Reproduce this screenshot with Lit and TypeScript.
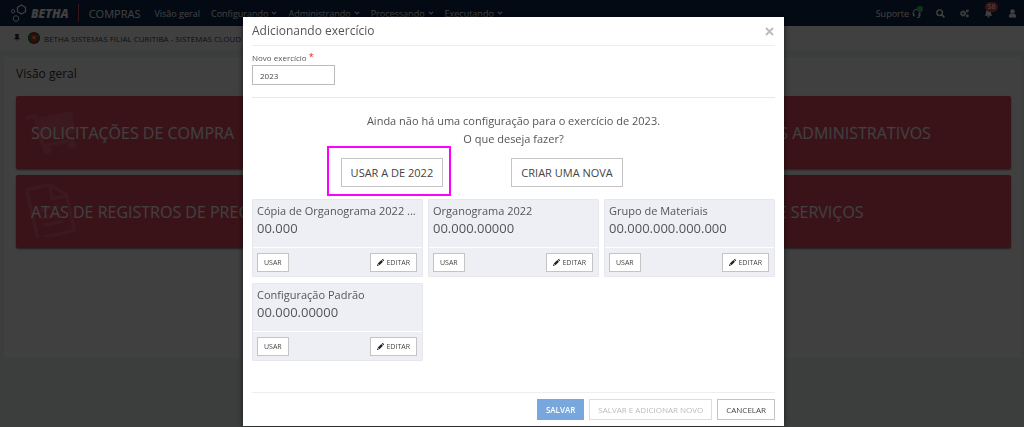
import { LitElement, html, css } from "lit";
import { customElement } from "lit/decorators.js";

const chevron = html`<svg class="chev" viewBox="0 0 10 10"><path d="M1.500 3 5 6.500 8.500 3" fill="none" stroke="currentColor" stroke-width="1.800"/></svg>`;
const pencil = html`<svg class="pencil" viewBox="0 0 16 16" aria-hidden="true"><path fill="currentColor" d="M0 16l1-4.600 3.600 3.600zM1.900 10.500 10 2.400l3.600 3.600-8.100 8.100zM11 1.400 12 .5c.6-.6 1.400-.6 2 0l1.600 1.600c.6.6.6 1.400 0 2l-1 1z"/></svg>`;

const cart = html`<svg class="tile-icon" viewBox="0 0 54 54"><g fill="none" stroke="#fff" stroke-width="3.500" stroke-linejoin="round" stroke-linecap="round"><path d="M3 14l8-2 8 30 30-6"/></g><g fill="#fff"><path d="M14 14l34-7 3 22-32 7z"/><circle cx="23" cy="46" r="4"/><circle cx="48" cy="41" r="4"/></g></svg>`;
const doc = html`<svg class="tile-icon" viewBox="0 0 56 56"><g transform="rotate(-13 28 28)" fill="none" stroke="#fff" stroke-width="3.500"><path d="M8 2h24l15 14v38H8zM32 2v15h15" stroke-linejoin="round"/><path d="M17 26h20M17 34h20M17 42h20"/></g></svg>`;

const menus = ["Configurando", "Administrando", "Processando", "Executando"];

const tiles = [
  { label: "SOLICITAÇÕES DE COMPRA", icon: cart },
  { label: "", icon: null },
  { label: "PROCESSOS ADMINISTRATIVOS", icon: null },
  { label: "ATAS DE REGISTROS DE PREÇOS", icon: doc },
  { label: "", icon: null },
  { label: "ORDENS DE SERVIÇOS", icon: null },
];

const configs = [
  { name: "Cópia de Organograma 2022 ...", mask: "00.000" },
  { name: "Organograma 2022", mask: "00.000.00000" },
  { name: "Grupo de Materiais", mask: "00.000.000.000.000" },
  { name: "Configuração Padrão", mask: "00.000.00000" },
];

@customElement("app-root")
export class AppRoot extends LitElement {
  static styles = css`
    :host { display: block; min-height: 100vh; background: #eff7f4; color: #444;
      font-family: "Open Sans", "Noto Sans", sans-serif; }
    * { box-sizing: border-box; }
    h1, h2, p { margin: 0; font-weight: 400; }
    a { color: inherit; text-decoration: none; }
    button, input { font-family: inherit; margin: 0; }

    .topbar { display: flex; align-items: center; height: 26px; padding: 0 7px 0 11px;
      background: #0c2850; color: #fff; font-size: 9px; }
    .brand { display: flex; align-items: center; gap: 4px; font-size: 12px; font-weight: 800; font-style: italic; }
    .brand svg { width: 16px; height: 18px; }
    .sep { width: 1px; height: 18px; margin: 0 10px 0 9px; background: #e84c64; }
    .product { font-size: 11px; margin-right: 14px; }
    .menu { display: flex; gap: 11px; }
    .menu a { display: flex; align-items: center; gap: 3px; white-space: nowrap; }
    .chev { width: 6px; height: 6px; }
    .tools { display: flex; align-items: center; gap: 15px; margin-left: auto; }
    .tools button { position: relative; display: flex; align-items: center; gap: 3px; padding: 0;
      border: 0; background: none; color: inherit; font-size: 9px; }
    .tools svg { width: 9px; height: 9px; display: block; }
    .dot { position: absolute; right: -2px; top: -1px; width: 6px; height: 6px; border-radius: 50%; background: #30d060; }
    .badge { position: absolute; left: 1px; top: -7px; width: 13px; height: 10px; border-radius: 5px;
      background: #f04040; font-size: 7px; line-height: 10px; font-weight: 600; text-align: center; }

    .entity { display: flex; align-items: center; gap: 4px; height: 24px; padding-left: 13px;
      background: #fff; font-size: 8px; white-space: nowrap; }
    .entity .pin { width: 8px; height: 8px; margin-right: 3px; }
    .entity .crest { width: 12px; height: 12px; }

    .panel { margin: 7px 3px 0 4px; padding: 8px 10px 110px 12px; background: #fff; }
    .panel h1 { font-size: 12px; line-height: 18px; margin-bottom: 13px; color: #333; }
    .tiles { display: grid; grid-template-columns: repeat(3, 1fr); gap: 6px; }
    .tile { position: relative; display: flex; align-items: center; height: 73px; padding: 0 15px;
      border-radius: 2px; background: #e84c64; box-shadow: 0 1px 2px rgba(0, 0, 0, .5);
      color: #fff; font-size: 16px; white-space: nowrap; }
    .tile-icon { position: absolute; left: 8px; top: 8px; width: 54px; height: 54px; opacity: .14; }

    .backdrop { position: fixed; inset: 0; padding: 17px 0 0 3px; overflow: auto; background: rgba(0, 0, 0, .75); }
    .dialog { width: 100%; max-width: 541px; margin: 0 auto; padding: 0 9px 6px; background: #fff;
      box-shadow: 0 0 6px rgba(0, 0, 0, .6); color: #555; }
    .head { display: flex; align-items: center; justify-content: space-between; height: 29px;
      border-bottom: 1px solid #eee; }
    .head h2 { font-size: 12px; line-height: 18px; }
    .close { padding: 0; border: 0; background: none; }
    .close svg { width: 9px; height: 9px; display: block; margin-right: 1px; }
    .field { display: flex; flex-direction: column; align-items: flex-start; gap: 1px; padding: 6px 0 12px;
      border-bottom: 1px solid #e8e8e8; font-size: 8px; }
    .field label { line-height: 12px; }
    .req { color: #e02020; font-size: 9px; vertical-align: 1px; line-height: 1; }
    .field input { width: 83px; height: 20px; padding: 0 7px; border: 1px solid #bbb; border-radius: 0;
      color: #444; font-size: 8px; }

    .ask { padding: 14px 0 10px; text-align: center; font-size: 11px; line-height: 18px; }
    .choices { display: grid; grid-template-columns: 1fr 1fr; margin: 0 23% 0 10%; justify-items: center; }
    .choice { position: relative; display: flex; }
    .choice button { height: 29px; padding: 0 9px; font-size: 11px; }
    .mark { position: absolute; inset: -12px -8px -9px -14px; border: 2px solid #f0f; pointer-events: none; }
    .btn { border: 1px solid #c4c4c4; border-radius: 0; background: #fff; color: #444; white-space: nowrap; }

    .cards { display: grid; grid-template-columns: repeat(3, 1fr); gap: 6px 5px; padding-top: 12px; }
    .card { min-width: 0; border: 1px solid #e6e7ec; border-radius: 1px; background: #eeeff5; }
    .card-top { height: 48px; padding: 2px 4px 0; border-bottom: 1px solid #fff; }
    .name { overflow: hidden; text-overflow: ellipsis; white-space: nowrap; font-size: 11px; line-height: 18px; }
    .mask { font-size: 13px; line-height: 17px; }
    .card-foot { display: flex; justify-content: space-between; padding: 5px 5px 4px 4px; }
    .card-foot .btn { display: flex; align-items: center; gap: 2px; height: 19px; padding: 0 6px; font-size: 7px; }
    .pencil { width: 7px; height: 7px; color: #222; }

    .foot { display: flex; justify-content: flex-end; gap: 5px; margin-top: 31px; padding-top: 6px;
      border-top: 1px solid #eee; }
    .foot .btn { height: 21px; padding: 0 8px; font-size: 8px; }
    .foot .primary { border-color: #78a7de; background: #78a7de; color: #fff; font-weight: 600; }
    .foot .off { border-color: #ddd; color: #bbb; }
  `;

  render() {
    return html`
      <header class="topbar">
        <a class="brand" href="#"><svg viewBox="0 0 16 18" fill="none" stroke="currentColor"><path stroke-width="1.300" d="M10.500 1l4 2.300v4.400l-4 2.300-4-2.300V3.300z"/><path d="M5 11.500l2.600 1.500v3L5 17.500 2.400 16v-3zM2 5.500l1.600.9v1.800L2 9.100.5 8.200V6.400z"/></svg>BETHA</a>
        <span class="sep"></span>
        <span class="product">COMPRAS</span>
        <nav class="menu">
          <a href="#">Visão geral</a>
          ${menus.map((m) => html`<a href="#">${m}${chevron}</a>`)}
        </nav>
        <div class="tools">
          <button>Suporte<svg viewBox="0 0 16 16" fill="none" stroke="currentColor" stroke-width="1.800"><path d="M2 9V7a6 6 0 0 1 12 0v5c0 2-1 3-5 3"/><path stroke-width="3" d="M3 8v5M13 8v5"/></svg><span class="dot"></span></button>
          <button aria-label="Pesquisar"><svg viewBox="0 0 16 16" fill="none" stroke="currentColor"><circle cx="6.500" cy="6.500" r="5" stroke-width="2.500"/><path stroke-width="3" d="M10 10l5 5"/></svg></button>
          <button aria-label="Configurações"><svg viewBox="0 0 16 16" fill="none" stroke="currentColor"><circle cx="5.500" cy="8" r="3.200" stroke-width="2.600"/><circle cx="5.500" cy="8" r="4.800" stroke-width="1.600" stroke-dasharray="2 1.770"/><circle cx="13" cy="3.500" r="1.700" stroke-width="1.800"/><circle cx="13" cy="12.500" r="1.700" stroke-width="1.800"/></svg></button>
          <button aria-label="Notificações"><svg viewBox="0 0 16 16" fill="currentColor"><path d="M8 1c3 0 4.500 2 4.500 5 0 3 1 4.500 2.500 6H1c1.500-1.500 2.500-3 2.500-6C3.500 3 5 1 8 1zM6 13h4c0 1.500-1 2.500-2 2.500S6 14.500 6 13z"/></svg><span class="badge">58</span></button>
          <button aria-label="Usuário"><svg viewBox="0 0 16 16" fill="currentColor"><circle cx="8" cy="4.500" r="4"/><path d="M1.500 15c0-4 1.500-6.500 3.500-7 2 1.300 4 1.300 6 0 2 .5 3.500 3 3.500 7z"/></svg></button>
        </div>
      </header>
      <div class="entity">
        <svg class="pin" viewBox="0 0 16 16" fill="#333"><path d="M4 0h8v2l-1 1v4c2 1 2.500 2 2.500 3.500h-4.700L8 16l-.8-5.500H2.500C2.500 9 3 8 5 7V3L4 2z"/></svg>
        <svg class="crest" viewBox="0 0 12 12"><circle cx="6" cy="6" r="6" fill="#483c2c"/><path d="M0 7c0-4 2-6 3-6l1 9c-2 0-4-1-4-3zM12 7c0-4-2-6-3-6L8 10c2 0 4-1 4-3z" fill="#3c6b3c"/><path d="M3 2h6v5c0 2-1.500 3-3 4-1.500-1-3-2-3-4z" fill="#d83020"/><path d="M4.500 4h3v3h-3z" fill="#e8a050"/></svg>
        <span>BETHA SISTEMAS FILIAL CURITIBA - SISTEMAS CLOUD</span>
      </div>
      <main class="panel">
        <h1>Visão geral</h1>
        <div class="tiles">
          ${tiles.map((t) => html`<a class="tile" href="#">${t.icon}<span>${t.label}</span></a>`)}
        </div>
      </main>

      <div class="backdrop">
        <section class="dialog" role="dialog" aria-labelledby="title">
          <div class="head">
            <h2 id="title">Adicionando exercício</h2>
            <button class="close" aria-label="Fechar"><svg viewBox="0 0 9 9" stroke="#bbb" stroke-width="1.800"><path d="M1 1l7 7M8 1 1 8"/></svg></button>
          </div>
          <div class="field">
            <label for="year">Novo exercício <span class="req">*</span></label>
            <input id="year" type="text" value="2023" />
          </div>
          <div class="ask">
            <p>Ainda não há uma configuração para o exercício de 2023.</p>
            <p>O que deseja fazer?</p>
          </div>
          <div class="choices">
            <div class="choice"><button class="btn">USAR A DE 2022</button><span class="mark"></span></div>
            <div class="choice"><button class="btn">CRIAR UMA NOVA</button></div>
          </div>
          <div class="cards">
            ${configs.map((c) => html`
              <article class="card">
                <div class="card-top"><p class="name">${c.name}</p><p class="mask">${c.mask}</p></div>
                <div class="card-foot"><button class="btn">USAR</button><button class="btn">${pencil}EDITAR</button></div>
              </article>`)}
          </div>
          <div class="foot">
            <button class="btn primary">SALVAR</button>
            <button class="btn off" disabled>SALVAR E ADICIONAR NOVO</button>
            <button class="btn">CANCELAR</button>
          </div>
        </section>
      </div>
    `;
  }
}
